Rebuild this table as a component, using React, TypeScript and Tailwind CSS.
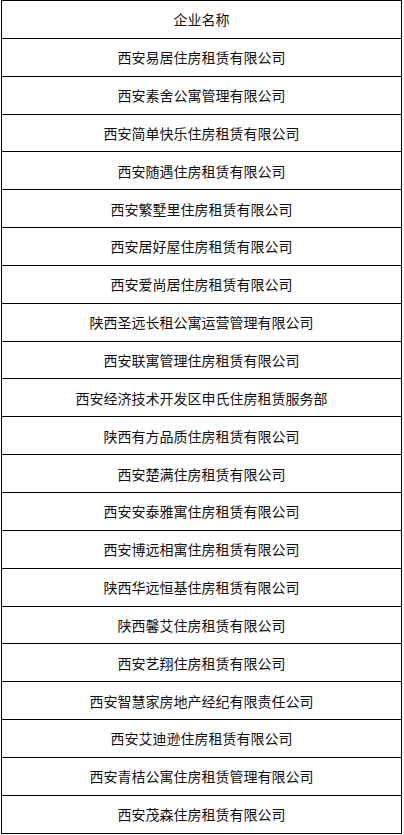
import React from "react";

const rows = [
  "企业名称",
  "西安易居住房租赁有限公司",
  "西安素舍公寓管理有限公司",
  "西安简单快乐住房租赁有限公司",
  "西安随遇住房租赁有限公司",
  "西安繁墅里住房租赁有限公司",
  "西安居好屋住房租赁有限公司",
  "西安爱尚居住房租赁有限公司",
  "陕西圣远长租公寓运营管理有限公司",
  "西安联寓管理住房租赁有限公司",
  "西安经济技术开发区申氏住房租赁服务部",
  "陕西有方品质住房租赁有限公司",
  "西安楚满住房租赁有限公司",
  "西安安泰雅寓住房租赁有限公司",
  "西安博远相寓住房租赁有限公司",
  "陕西华远恒基住房租赁有限公司",
  "陕西馨艾住房租赁有限公司",
  "西安艺翔住房租赁有限公司",
  "西安智慧家房地产经纪有限责任公司",
  "西安艾迪逊住房租赁有限公司",
  "西安青桔公寓住房租赁管理有限公司",
  "西安茂森住房租赁有限公司",
];

export default function App() {
  return (
    <div className="bg-white w-[404px] h-[835px] overflow-hidden">
      <div
        className="ml-[1px] w-[401px] border-t border-l border-r border-black text-[14px] text-[#111]"
        style={{ fontFamily: '"Noto Sans CJK SC", "Noto Sans", sans-serif' }}
      >
        {rows.map((r, i) => (
          <div
            key={i}
            className="h-[37.85px] box-border border-b border-black flex items-center justify-center leading-none"
          >
            {r}
          </div>
        ))}
      </div>
    </div>
  );
}
